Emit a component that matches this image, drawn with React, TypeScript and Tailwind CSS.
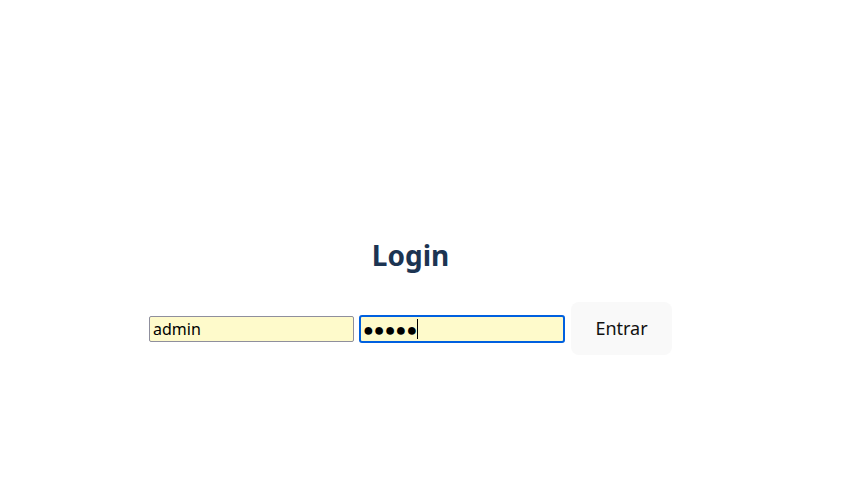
import React from "react";

export default function App() {
  return (
    <div
      className="w-[841px] h-[480px] bg-white overflow-hidden"
      style={{ fontFamily: '"Noto Sans", "Open Sans", sans-serif' }}
    >
      <div className="w-[821px] flex flex-col items-center pt-[236px]">
        <h1 className="text-[28px] leading-[38px] font-bold text-[#1c3452]">Login</h1>
        <div className="mt-[28px] flex items-center">
          <input
            defaultValue="admin"
            className="w-[205px] h-[26px] bg-[#fefacb] border border-[#8f8f9d] rounded-[2px] px-[3px] text-[16px] text-black outline-none"
            style={{ fontFamily: '"Noto Sans", sans-serif' }}
          />
          <div className="ml-[5px] w-[206px] h-[28px] bg-[#fefacb] border-2 border-[#0060df] rounded-[3px] flex items-center px-[2px]">
            <span className="text-[18px] text-black leading-none">●●●●●</span>
            <span className="w-px h-[20px] bg-black" />
          </div>
          <button className="ml-[6px] w-[101px] h-[53px] rounded-[8px] bg-[#f9f9f9] text-[18px] text-[#111]">
            Entrar
          </button>
        </div>
      </div>
    </div>
  );
}
